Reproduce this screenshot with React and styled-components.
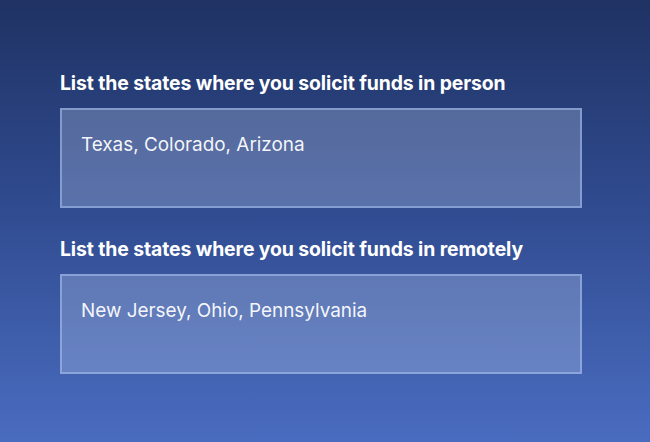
import React from "react";
import styled, { createGlobalStyle } from "styled-components";

const Global = createGlobalStyle`
  html, body { margin: 0; padding: 0; }
  body {
    width: 650px;
    height: 442px;
    overflow: hidden;
    font-family: Inter, "Noto Sans", sans-serif;
  }
`;

const Page = styled.div`
  box-sizing: border-box;
  width: 650px;
  height: 442px;
  background: linear-gradient(180deg, #1f3263 0%, #2f4a8e 45%, #4a6cc0 100%);
  padding: 72px 68px 0 60px;
  display: flex;
  flex-direction: column;
  gap: 30px;
`;

const Field = styled.div`
  display: flex;
  flex-direction: column;
  gap: 14px;
`;

const Label = styled.label`
  color: #ffffff;
  font-size: 19.4px;
  font-weight: 700;
  line-height: 22px;
  letter-spacing: -0.1px;
`;

const Box = styled.div`
  box-sizing: border-box;
  height: 100px;
  border: 2px solid rgba(170, 195, 240, 0.55);
  background: rgba(200, 215, 245, 0.28);
  padding: 22px 19px;
  color: rgba(255, 255, 255, 0.95);
  font-size: 18.9px;
  line-height: 26px;
  font-weight: 400;
`;

const fields = [
  { label: "List the states where you solicit funds in person", value: "Texas, Colorado, Arizona" },
  { label: "List the states where you solicit funds in remotely", value: "New Jersey, Ohio, Pennsylvania" },
];

export default function App() {
  return (
    <>
      <Global />
      <Page>
        {fields.map((f) => (
          <Field key={f.label}>
            <Label>{f.label}</Label>
            <Box>{f.value}</Box>
          </Field>
        ))}
      </Page>
    </>
  );
}
